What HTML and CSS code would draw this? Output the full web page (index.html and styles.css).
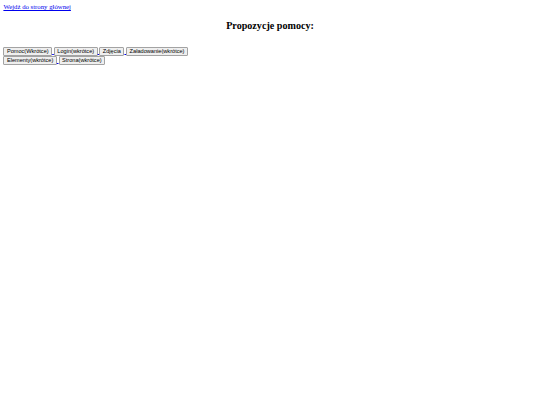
FILE: index.html
```html
<!DOCTYPE html>
<html lang="pl">
<head>
<meta charset="utf-8">
<title>Pomoc</title>
<link rel="stylesheet" href="styles.css">
</head>
<body>
<a href="#" class="home">Wejdź do strony głównej</a>
<h2 class="title">Propozycje pomocy:</h2>
<div class="buttons">
<div class="row"><a href="#"><button class="btn">Pomoc(Wkrótce)</button></a><a href="#"> <button class="btn">Login(wkrótce)</button></a><a href="#"> <button class="btn">Zdjęcia</button></a><a href="#"> <button class="btn">Załadowanie(wkrótce)</button></a></div>
<div class="row"><a href="#"><button class="btn">Elementy(wkrótce)</button></a><a href="#"> <button class="btn">Strona(wkrótce)</button></a></div>
</div>
</body>
</html>
```
FILE: styles.css
```css
body {
  margin: 3.4px;
  font-family: "Liberation Serif", "Times New Roman", serif;
  font-size: 6.75px;
  background: #fff;
}
a {
  color: #0000ee;
}
.home {
  display: inline-block;
  line-height: 7.8px;
}
.title {
  text-align: center;
  font-size: 10.125px;
  font-weight: bold;
  margin: 8.4px 0;
  line-height: 11.6px;
}
.buttons {
  padding-top: 7px;
  display: flex;
  flex-direction: column;
  gap: 0.4px;
}
.row {
  line-height: 8.5px;
  height: 8.9px;
}
.btn {
  font-family: "Liberation Sans", Arial, sans-serif;
  font-size: 5.625px;
  line-height: 6.4px;
  padding: 0.4px 2.5px;
  border: 1px solid #a3a3a3;
  border-radius: 1px;
  background: #efefef;
  color: #000;
  margin: 0;
  vertical-align: baseline;
}
```
